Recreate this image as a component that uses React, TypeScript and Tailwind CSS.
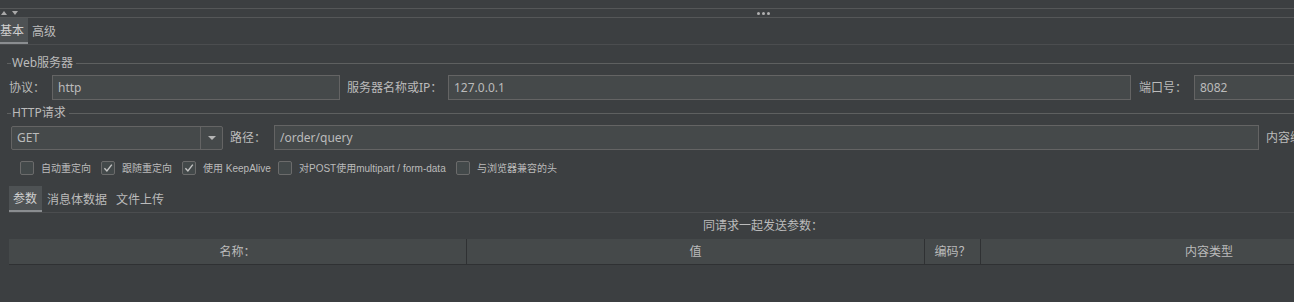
import React from 'react';

// Small check glyph used inside the Darcula-style checkboxes
const CheckMark: React.FC = () => (
  <svg width="10" height="10" viewBox="0 0 10 10">
    <path d="M1.4 5.2 L3.9 7.9 L8.8 1.6" fill="none" stroke="#c4c4c4" strokeWidth="1.4" />
  </svg>
);

const CheckItem: React.FC<{ label: string; checked?: boolean; w: string }> = ({ label, checked, w }) => (
  <div className={`flex items-center gap-[7px] ${w}`}>
    <div className="flex h-[14px] w-[14px] shrink-0 items-center justify-center rounded-[2px] border border-[#6b6b6b] bg-[#43494a]">
      {checked && <CheckMark />}
    </div>
    <span className="whitespace-nowrap font-['Liberation_Sans','Noto_Sans_CJK_SC',sans-serif] text-[10px] text-[#bbbbbb]">
      {label}
    </span>
  </div>
);

// Group title with the etched line, like a titled border
const GroupTitle: React.FC<{ title: string }> = ({ title }) => (
  <div className="flex h-[16px] items-center pl-[7px]">
    <div className="h-px w-[4px] bg-[#5e6060]" />
    <span className="px-[1px] text-[12px] leading-none text-[#bbbbbb]">{title}</span>
    <div className="ml-[2px] h-px flex-1 bg-[#5e6060]" />
  </div>
);

const Field: React.FC<{ value: string; w: string }> = ({ value, w }) => (
  <div className={`flex h-[25px] shrink-0 items-center border border-[#646464] bg-[#45494a] px-[5px] text-[12px] text-[#bbbbbb] ${w}`}>
    {value}
  </div>
);

export default function App() {
  return (
    <div className="h-[302px] w-[1294px] overflow-hidden bg-[#3c3f41] font-['Noto_Sans','Noto_Sans_CJK_SC',sans-serif] text-[12px] text-[#bbbbbb]">
      <div className="w-[1440px]">
        <div className="h-[8px]" />

        {/* splitter bar */}
        <div className="relative flex h-[10px] items-center border-y border-[#555758]">
          <div className="ml-[1px] h-0 w-0 border-x-[3px] border-b-[4px] border-x-transparent border-b-[#a9a9a9]" />
          <div className="ml-[5px] h-0 w-0 border-x-[3px] border-t-[4px] border-x-transparent border-t-[#a9a9a9]" />
          <div className="ml-[739px] flex gap-[2px]">
            <div className="h-[3px] w-[3px] rounded-full bg-[#b0b0b0]" />
            <div className="h-[3px] w-[3px] rounded-full bg-[#b0b0b0]" />
            <div className="h-[3px] w-[3px] rounded-full bg-[#b0b0b0]" />
          </div>
        </div>

        {/* main tabs */}
        <div className="flex h-[27px] border-b border-[#4b4d4f]">
          <div className="flex w-[28px] flex-col bg-[#4e5254]">
            <div className="flex flex-1 items-center pt-[1px] text-[12px] text-[#d0d0d0]">基本</div>
            <div className="h-[2px] bg-[#8a8d90]" />
          </div>
          <div className="flex items-center pl-[4px] pt-[1px] text-[12px]">高级</div>
        </div>

        {/* Web服务器 */}
        <div className="mt-[10px]">
          <GroupTitle title="Web服务器" />
        </div>
        <div className="mt-[4px] flex items-center">
          <div className="w-[52px] pl-[9px]">协议：</div>
          <Field value="http" w="w-[288px]" />
          <div className="w-[108px] pl-[7px]">服务器名称或IP：</div>
          <Field value="127.0.0.1" w="w-[683px]" />
          <div className="w-[63px] pl-[8px]">端口号：</div>
          <Field value="8082" w="w-[240px]" />
        </div>

        {/* HTTP请求 */}
        <div className="mt-[5px]">
          <GroupTitle title="HTTP请求" />
        </div>
        <div className="mt-[4px] flex items-center">
          <div className="ml-[11px] flex h-[24px] w-[212px] items-stretch rounded-[2px] border border-[#646464] bg-[#45494a]">
            <div className="flex flex-1 items-center pl-[5px]">GET</div>
            <div className="flex w-[22px] items-center justify-center border-l border-[#646464]">
              <div className="h-0 w-0 border-x-[4px] border-t-[4px] border-x-transparent border-t-[#b5b5b5]" />
            </div>
          </div>
          <div className="w-[51px] pl-[7px]">路径：</div>
          <Field value="/order/query" w="w-[985px] h-[24px]" />
          <div className="pl-[7px]">内容编码：</div>
        </div>

        {/* options */}
        <div className="mt-[11px] flex h-[14px] items-center pl-[20px]">
          <CheckItem label="自动重定向" w="w-[81px]" />
          <CheckItem label="跟随重定向" checked w="w-[81px]" />
          <CheckItem label="使用 KeepAlive" checked w="w-[96px]" />
          <CheckItem label="对POST使用multipart / form-data" w="w-[178px]" />
          <CheckItem label="与浏览器兼容的头" w="w-[120px]" />
        </div>

        {/* sub tabs */}
        <div className="ml-[9px] mt-[11px] flex h-[27px] border-b border-[#4b4d4f]">
          <div className="flex w-[33px] flex-col bg-[#4e5254]">
            <div className="flex flex-1 items-center pl-[4px] pt-[1px] text-[#d0d0d0]">参数</div>
            <div className="h-[2px] bg-[#8a8d90]" />
          </div>
          <div className="flex items-center pl-[5px] pt-[1px]">消息体数据</div>
          <div className="flex items-center pl-[9px] pt-[1px]">文件上传</div>
        </div>

        <div className="flex h-[26px] items-center pl-[703px]">同请求一起发送参数：</div>

        {/* table header */}
        <div className="ml-[9px] flex h-[26px] border-b border-[#2f3133] bg-[#45494a]">
          <div className="flex w-[458px] items-center justify-center border-r border-[#2f3133]">名称：</div>
          <div className="flex w-[458px] items-center justify-center border-r border-[#2f3133]">值</div>
          <div className="flex w-[56px] items-center justify-center border-r border-[#2f3133]">编码？</div>
          <div className="flex w-[456px] items-center justify-center">内容类型</div>
        </div>
      </div>
    </div>
  );
}
